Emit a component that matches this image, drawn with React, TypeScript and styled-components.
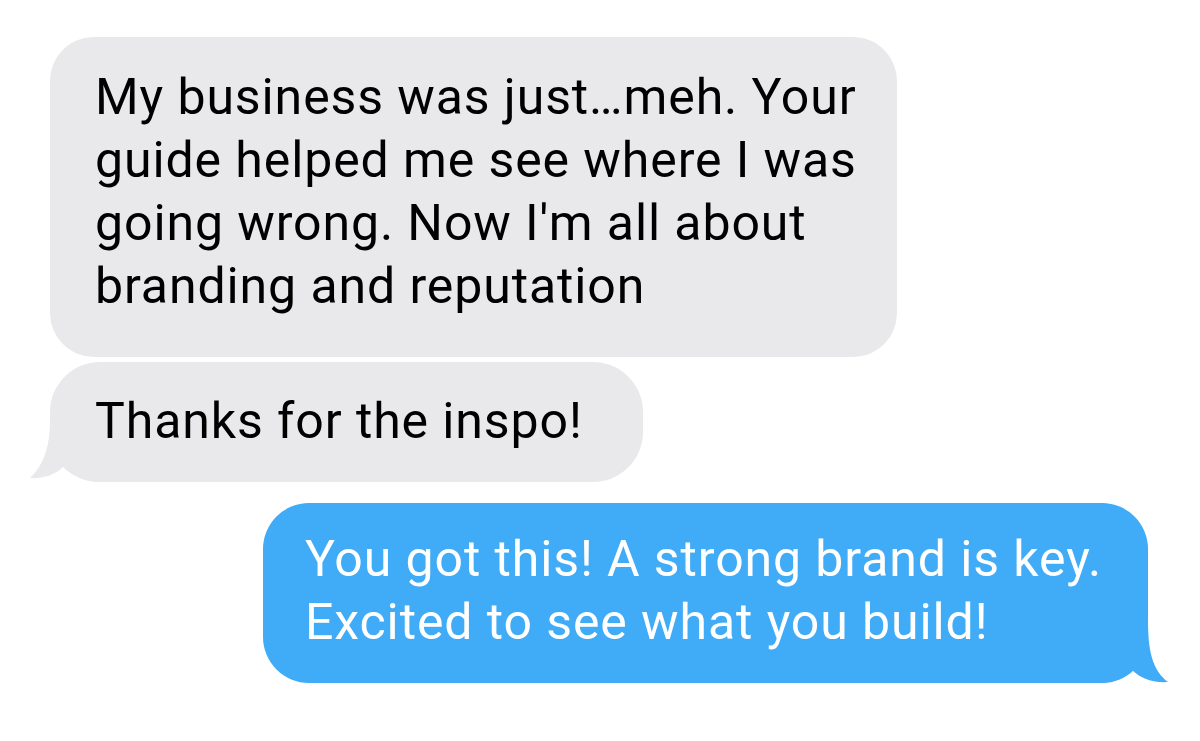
import React from "react";
import styled, { createGlobalStyle } from "styled-components";

const GlobalStyle = createGlobalStyle`
  html, body {
    margin: 0;
    padding: 0;
    background: #ffffff;
  }
  body {
    font-family: Roboto, "Noto Sans", "Liberation Sans", sans-serif;
  }
`;

const Thread = styled.div`
  width: 1200px;
  height: 741px;
  box-sizing: border-box;
  padding: 37px 52px 0 50px;
  display: flex;
  flex-direction: column;
  background: #ffffff;
`;

const Bubble = styled.div<{
  $from: "them" | "me";
  $w: number;
  $pad: string;
  $mt: number;
  $radius: number;
}>`
  position: relative;
  box-sizing: border-box;
  width: ${(p) => p.$w}px;
  margin-top: ${(p) => p.$mt}px;
  align-self: ${(p) => (p.$from === "me" ? "flex-end" : "flex-start")};
  padding: ${(p) => p.$pad};
  border-radius: ${(p) => p.$radius}px;
  background: ${(p) => (p.$from === "me" ? "#40abf6" : "#e9e9eb")};
  color: ${(p) => (p.$from === "me" ? "#ffffff" : "#000000")};
  font-size: 50px;
  line-height: 63px;
  font-weight: 400;
  letter-spacing: 0.9px;
`;

const Text = styled.span`
  position: relative;
  z-index: 1;
`;

const TailSvg = styled.svg<{ $side: "left" | "right" }>`
  position: absolute;
  bottom: 0;
  ${(p) => (p.$side === "left" ? "left: -20px;" : "right: -20px;")}
  width: 70px;
  height: 70px;
  overflow: visible;
`;

const GrayTail = () => (
  <TailSvg $side="left" viewBox="0 0 70 70" aria-hidden>
    <path
      d="M20 8 C20 36 13 54 0 66 C14 67 26 62 33 55 C42 64 56 70 70 70 L70 8 Z"
      fill="#e9e9eb"
    />
  </TailSvg>
);

const BlueTail = () => (
  <TailSvg $side="right" viewBox="0 0 70 70" aria-hidden>
    <path
      d="M50 7 C50 37 54 57 70 69 C54 70 42 65 34 57 C26 65 14 70 0 70 L0 7 Z"
      fill="#40abf6"
    />
  </TailSvg>
);

export default function App() {
  return (
    <>
      <GlobalStyle />
      <Thread>
        <Bubble $from="them" $w={847} $mt={0} $radius={44} $pad="29px 20px 39px 45px">
          <Text>
            My business was just…meh. Your guide helped me see where I was going wrong. Now I'm all
            about branding and reputation
          </Text>
        </Bubble>
        <Bubble $from="them" $w={593} $mt={5} $radius={50} $pad="28px 20px 29px 45px">
          <GrayTail />
          <Text>Thanks for the inspo!</Text>
        </Bubble>
        <Bubble $from="me" $w={885} $mt={21} $radius={46} $pad="25px 20px 29px 42px">
          <BlueTail />
          <Text>You got this! A strong brand is key. Excited to see what you build!</Text>
        </Bubble>
      </Thread>
    </>
  );
}
